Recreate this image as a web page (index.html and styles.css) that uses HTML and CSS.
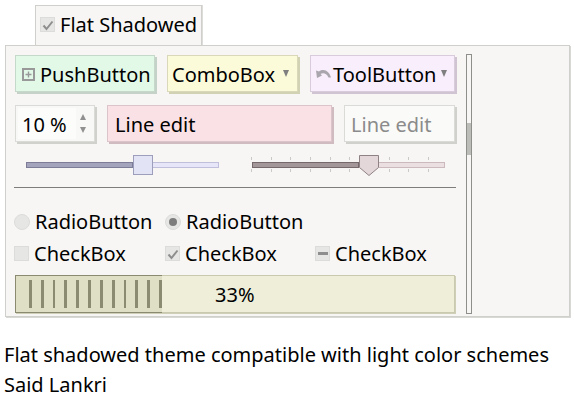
FILE: index.html
```html
<!DOCTYPE html>
<html lang="en">
<head>
    <meta charset="UTF-8">
    <title>Flat Shadowed</title>
    <link rel="stylesheet" href="styles.css">
</head>
<body>

<div class="tabbar">
    <div class="tab">
        <span class="check small">
            <svg width="16" height="16" viewBox="0 0 16 16"><path d="M3.5 8.5 L6.5 12 L12.5 4.5" fill="none" stroke="#8e8e8e" stroke-width="2"/></svg>
        </span>
        <span>Flat Shadowed</span>
    </div>
</div>

<div class="panel">
    <div class="content">
        <div class="row">
            <div class="btn push">
                <svg class="push-icon" width="13" height="13" viewBox="0 0 13 13"><rect x="1" y="1" width="11" height="11" fill="none" stroke="#999" stroke-width="2"/><path d="M6.5 3.5 V9.5 M3.5 6.5 H9.5" stroke="#999" stroke-width="1.4"/></svg>
                <span>PushButton</span>
            </div>
            <div class="btn combo">
                <span>ComboBox</span>
                <span class="arrow"></span>
            </div>
            <div class="btn tool">
                <svg width="15" height="10" viewBox="0 0 15 10"><path d="M0 1.500 L1 9 L6 6.500 L4.500 5 C7 3.500 10.500 4 12.500 8.500 L15 8.500 C13 2 8 -1 3 2.500 Z" fill="#a9a6ad"/></svg>
                <span>ToolButton</span>
                <span class="arrow"></span>
            </div>
        </div>

        <div class="row second">
            <div class="spin">
                <span class="spin-text">10 %</span>
                <span class="spin-arrows"><i class="up"></i><i class="down"></i></span>
            </div>
            <div class="edit pink">Line edit</div>
            <div class="edit off">Line edit</div>
        </div>

        <div class="sliders">
            <div class="slider blue">
                <div class="fill"></div>
                <div class="handle"></div>
                <div class="rest"></div>
            </div>
            <div class="slider rose">
                <div class="ticks top">
                    <i></i><i></i><i></i><i></i><i></i><i></i><i></i><i></i><i></i><i></i>
                </div>
                <div class="fill"></div>
                <svg class="pin" width="22" height="21" viewBox="0 0 22 21"><path d="M1.500 .5 H20.500 V12.500 L11 20.500 L1.500 12.500 Z" fill="#e3d7d9" stroke="#8f8285"/></svg>
                <div class="rest"></div>
                <div class="ticks bottom">
                    <i></i><i></i><i></i><i></i><i></i><i></i><i></i><i></i><i></i><i></i>
                </div>
            </div>
        </div>

        <div class="line"></div>

        <div class="opts radios">
            <div class="opt first"><span class="radio"></span><span>RadioButton</span></div>
            <div class="opt"><span class="radio on"></span><span>RadioButton</span></div>
        </div>

        <div class="opts checks">
            <div class="opt first"><span class="check"></span><span>CheckBox</span></div>
            <div class="opt second-opt">
                <span class="check">
                    <svg width="16" height="16" viewBox="0 0 16 16"><path d="M3.500 8.500 L6.500 12 L12.500 4.500" fill="none" stroke="#8e8e8e" stroke-width="2"/></svg>
                </span>
                <span>CheckBox</span>
            </div>
            <div class="opt"><span class="check"><b class="dash"></b></span><span>CheckBox</span></div>
        </div>

        <div class="progress">
            <div class="chunk">
                <i></i><i></i><i></i><i></i><i></i><i></i><i></i><i></i><i></i><i></i><i></i><i></i>
            </div>
            <div class="percent">33%</div>
        </div>
    </div>

    <div class="scroll"><div class="thumb"></div></div>
</div>

<p class="desc">Flat shadowed theme compatible with light color schemes</p>
<p class="desc">Said Lankri</p>

</body>
</html>
```

FILE: styles.css
```css
* {
    box-sizing: border-box;
}
body {
    margin: 0;
    background-color: #fff;
    color: #000;
    font-family: "Noto Sans", sans-serif;
    font-size: 20px;
    line-height: 27px;
}
i {
    display: block;
}
svg {
    display: block;
    flex: none;
}

.tabbar {
    height: 45px;
    padding: 5px 0 0 35px;
}
.tab {
    width: 167px;
    height: 40px;
    display: flex;
    align-items: center;
    gap: 5px;
    padding: 0 0 2px 4px;
    background: #f7f6f4;
    border: 1px solid #cfcfcb;
    border-bottom: none;
    box-shadow: 1px 0 0 #dddcd9;
    position: relative;
    z-index: 1;
    margin-bottom: -1px;
}

.panel {
    width: 565px;
    height: 272px;
    margin-left: 5px;
    padding: 9px 0 0 8px;
    display: flex;
    background: #f7f6f4;
    border: 1px solid #cfcfcb;
    box-shadow: 1px 1px 0 #d8d8d5;
}
.content {
    width: 442px;
}
.scroll {
    width: 6px;
    height: 260px;
    margin: -1px 0 0 10px;
    padding-top: 68px;
    border: 1px solid #8e8e8a;
    background: #f7f6f4;
}
.thumb {
    height: 32px;
    background: #bcbcb9;
}

.row {
    display: flex;
    height: 37px;
    margin-left: 1px;
    gap: 12px;
}
.second {
    margin-top: 13px;
}
.btn {
    display: flex;
    align-items: center;
    height: 37px;
    padding-top: 1px;
    border: 1px solid;
}
.push {
    width: 140px;
    padding-left: 6px;
    gap: 5px;
    background: #e3f9e8;
    border-color: #c5d8ca;
    box-shadow: 2px 2px 0 #c5d2c8;
}
.combo {
    width: 131px;
    padding-left: 4px;
    background: #fbfbd9;
    border-color: #d9d9b9;
    box-shadow: 2px 2px 0 #d1d1b4;
}
.tool {
    width: 145px;
    padding-left: 5px;
    gap: 2px;
    background: #f9eefb;
    border-color: #d8cbdb;
    box-shadow: 2px 2px 0 #d0c4d2;
}
.arrow {
    width: 0;
    height: 0;
    margin-left: 8px;
    margin-bottom: 1px;
    border-left: 3.500px solid transparent;
    border-right: 3.500px solid transparent;
    border-top: 7px solid #7f7f7f;
}
.tool .arrow {
    margin-left: 3px;
}

.spin {
    width: 80px;
    height: 37px;
    display: flex;
    align-items: center;
    padding: 2px 0 2px 2px;
    background: #f8f8f6;
    border: 1px solid #dadad7;
    box-shadow: 2px 2px 0 #d0d0cd;
}
.spin-text {
    width: 58px;
    height: 31px;
    padding: 3px 0 0 4px;
    background: #fcfcfa;
}
.spin-arrows {
    margin-left: 4px;
}
.spin-arrows i {
    width: 0;
    height: 0;
    border-left: 3px solid transparent;
    border-right: 3px solid transparent;
}
.spin-arrows .up {
    border-bottom: 6px solid #909090;
    margin-bottom: 7px;
}
.spin-arrows .down {
    border-top: 6px solid #909090;
}
.edit {
    height: 37px;
    padding-left: 7px;
    line-height: 37px;
    border: 1px solid;
}
.pink {
    width: 225px;
    background: #fae1e6;
    border-color: #dcc5ca;
    box-shadow: 2px 2px 0 #d0bcc0;
}
.off {
    width: 111px;
    padding-left: 6px;
    color: #8b8b8b;
    background: #fafaf8;
    border-color: #dadad7;
    box-shadow: 2px 2px 0 #d0d0cd;
}

.sliders {
    display: flex;
    height: 22px;
    margin-top: 12px;
    margin-left: 12px;
    gap: 33px;
}
.slider {
    width: 193px;
    height: 22px;
    display: flex;
    align-items: center;
    position: relative;
}
.fill {
    height: 6px;
    width: 107px;
    border: 1px solid;
}
.rest {
    height: 6px;
    flex: 1;
    border: 1px solid;
    border-left: none;
}
.handle {
    flex: none;
    width: 20px;
    height: 20px;
    background: #e3e3f6;
    border: 1px solid #9d9dbc;
}
.blue .fill {
    background: #a4a4bd;
    border-color: #7d7d98;
}
.blue .rest {
    background: #e6e6f8;
    border-color: #bfbfdc;
}
.rose .fill {
    background: #a3979a;
    border-color: #76696c;
}
.rose .rest {
    background: #ecdfe2;
    border-color: #cbb9bd;
}
.pin {
    margin: 0 -1px;
    position: relative;
    z-index: 1;
}
.ticks {
    position: absolute;
    left: -1px;
    width: 178px;
    display: flex;
    justify-content: space-between;
}
.ticks i {
    width: 1px;
    height: 3px;
    background: #c9c9c6;
}
.ticks.top {
    top: 3px;
}
.ticks.bottom {
    top: 15px;
}

.line {
    height: 1px;
    margin-top: 11px;
    background: #7d7d7a;
}

.opts {
    display: flex;
    height: 27px;
}
.radios {
    margin-top: 20px;
}
.checks {
    margin-top: 5px;
}
.opt {
    display: flex;
    align-items: center;
    gap: 5px;
}
.first {
    width: 151px;
}
.second-opt {
    width: 150px;
}
.radio {
    width: 16px;
    height: 16px;
    border-radius: 50%;
    background: #e6e6e4;
    border: 1px solid #dcdcda;
    display: flex;
    align-items: center;
    justify-content: center;
}
.radio.on::after {
    content: "";
    width: 8px;
    height: 8px;
    border-radius: 50%;
    background: #7d7d7d;
}
.check {
    width: 15px;
    height: 15px;
    background: #e6e6e4;
    border: 1px solid #dcdcda;
    display: flex;
    align-items: center;
    justify-content: center;
}
.check.small {
    flex: none;
}
.check svg {
    margin: -1px;
}
.dash {
    width: 10px;
    height: 3px;
    background: #8e8e8e;
}

.progress {
    width: 440px;
    height: 38px;
    margin: 8px 0 0 1px;
    display: flex;
    background: #efeed9;
    border: 1px solid #c9c9b0;
    box-shadow: 1px 1px 0 #cfcfb8;
    position: relative;
}
.chunk {
    width: 147px;
    margin: -1px 0 -1px -1px;
    padding: 4px 0 4px 13px;
    display: flex;
    gap: 9px;
    background: #dfdfc6;
    border: 1px solid #8a8a70;
    border-right: none;
}
.chunk i {
    width: 3px;
    background: #8b8b72;
}
.percent {
    position: absolute;
    left: 199px;
    top: 5px;
}

.desc {
    margin: 0 0 3px 4px;
}
.panel + .desc {
    margin-top: 24px;
}
```
